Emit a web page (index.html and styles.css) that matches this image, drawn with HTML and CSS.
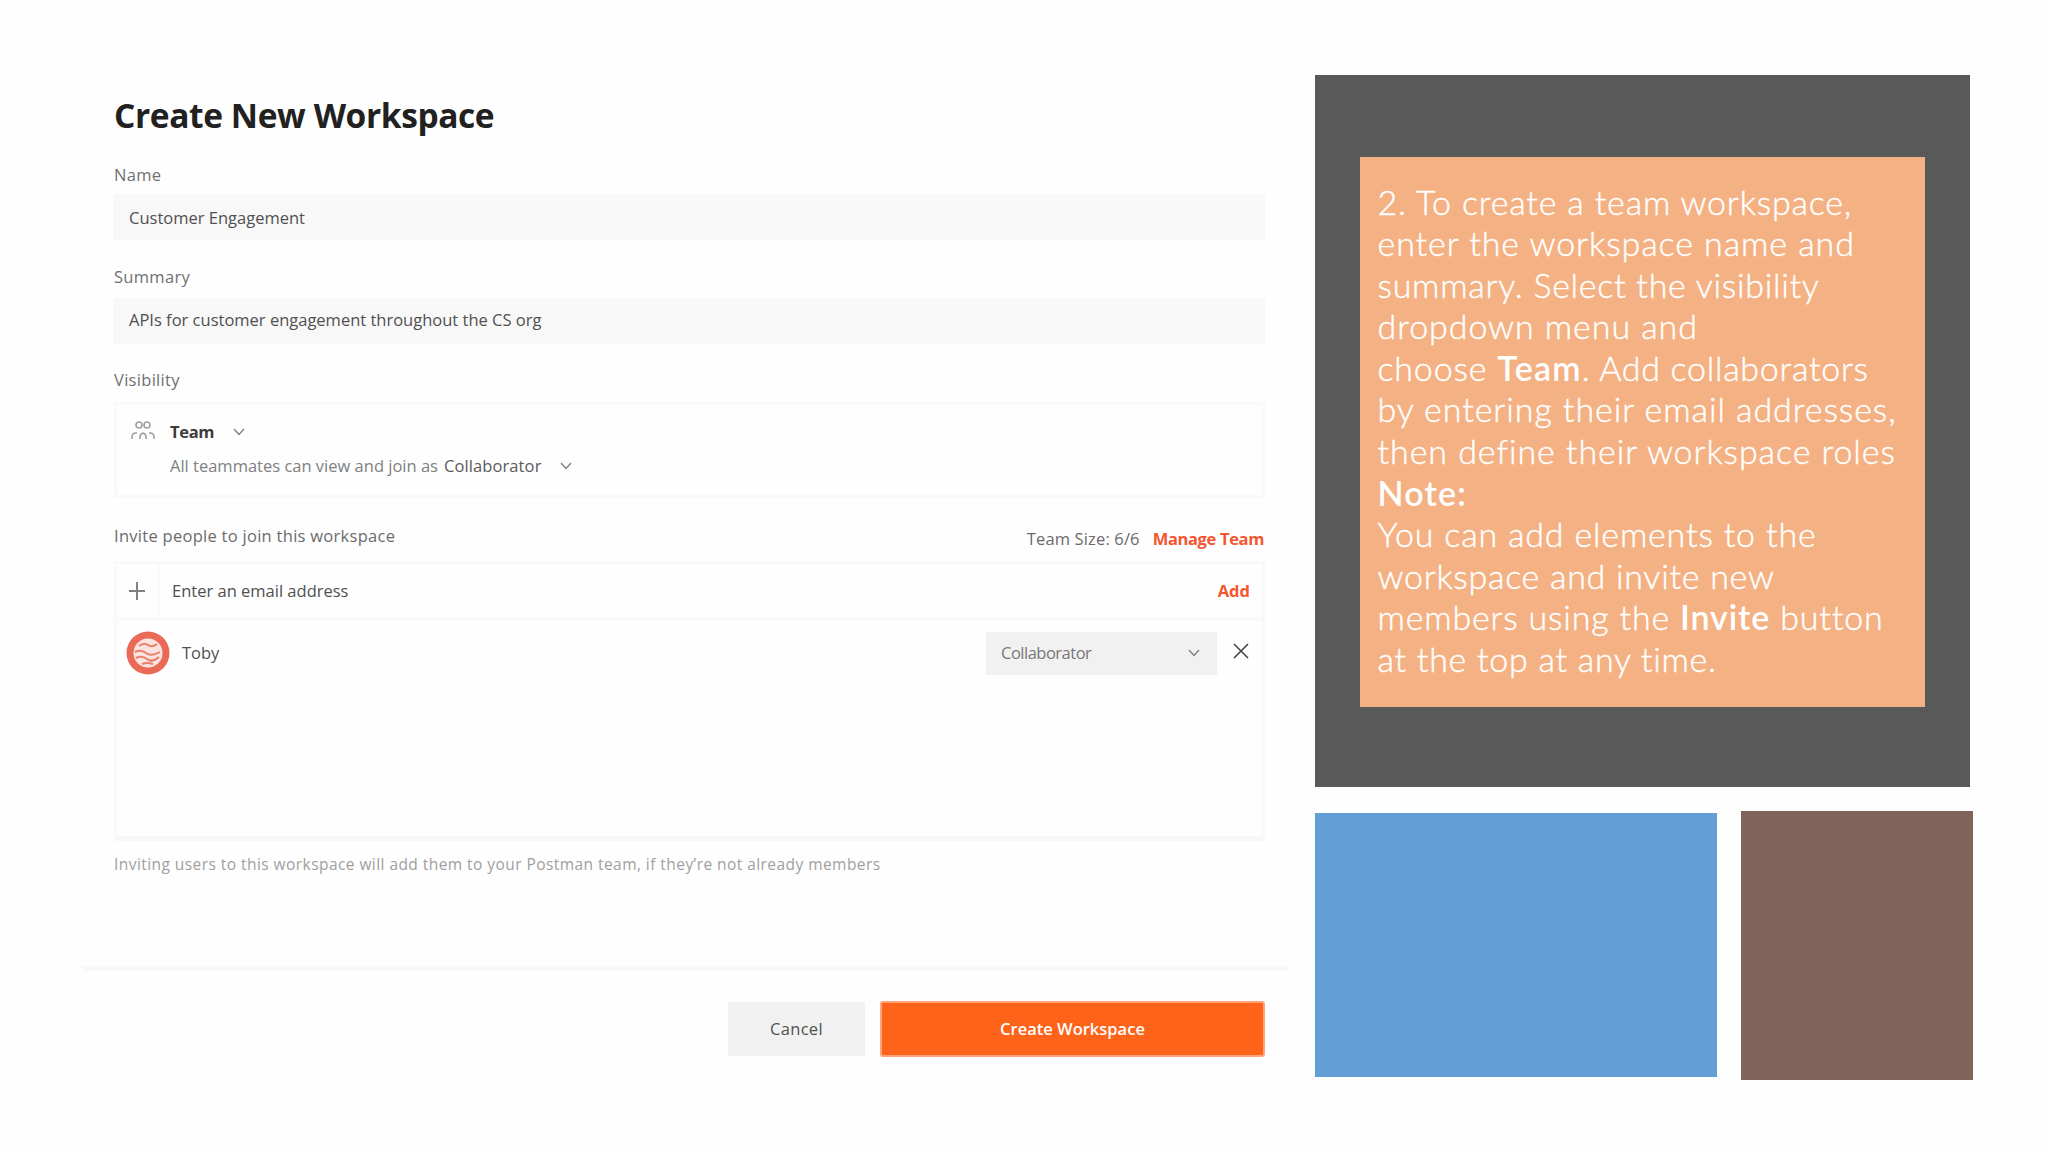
FILE: index.html
```html
<!DOCTYPE html>
<html lang="en">
<head>
<meta charset="utf-8">
<title>Create New Workspace</title>
<link rel="stylesheet" href="styles.css">
</head>
<body>
<main class="slide">
  <section class="dialog">
    <div class="form">
      <h1 class="title">Create New Workspace</h1>
      <div class="label label-name">Name</div>
      <div class="field">Customer Engagement</div>
      <div class="label label-summary">Summary</div>
      <div class="field field-summary">APIs for customer engagement throughout the CS org</div>
      <div class="label label-visibility">Visibility</div>
      <div class="visibility">
        <svg class="people" viewBox="0 0 26 22"><g fill="none" stroke="#a0a0a0" stroke-width="1.6"><circle cx="9" cy="5" r="3"/><circle cx="17" cy="5" r="3"/><path d="M2 19v-2q0-4 4-4h1M10 19v-2q0-3 3-4q3 1 3 4v2M19 13h1q4 0 4 4v2"/></g></svg>
        <div class="visibility-text">
          <div class="line"><b class="team">Team</b><svg class="chev chev-team" viewBox="0 0 12 8"><path d="M1 1l5 5.500l5-5.500"/></svg></div>
          <div class="line role"><span class="muted">All teammates can view and join as</span><span class="role-name">Collaborator</span><svg class="chev chev-role" viewBox="0 0 12 8"><path d="M1 1l5 5.500l5-5.500"/></svg></div>
        </div>
      </div>
      <div class="invite-head">
        <span class="invite-label">Invite people to join this workspace</span>
        <span class="team-size">Team Size: 6/6</span>
        <b class="link manage">Manage Team</b>
      </div>
      <div class="people-box">
        <div class="email-row">
          <div class="plus"><svg viewBox="0 0 18 18"><path d="M9 0v18M1 9h16"/></svg></div>
          <div class="email">Enter an email address</div>
          <b class="link">Add</b>
        </div>
        <div class="member-row">
          <svg class="avatar" viewBox="0 0 44 44"><circle cx="22" cy="22" r="21.500" fill="#ea6a57"/><circle cx="22" cy="22" r="14.500" fill="#fbe3df"/><g fill="none" stroke="#ea7d6c" stroke-width="2"><path d="M13 15q5-4 9-1t9-1M9 21q6-3 11 1t14-1M10 27q6-3 11 1t12-2M16 33q5-2 11 0"/></g></svg>
          <span class="member">Toby</span>
          <div class="select"><span>Collaborator</span><svg class="chev" viewBox="0 0 12 8"><path d="M1 1l5 5.500l5-5.500"/></svg></div>
          <svg class="close" viewBox="0 0 16 16"><path d="M1 1l14 14M15 1l-14 14"/></svg>
        </div>
      </div>
      <p class="note">Inviting users to this workspace will add them to your Postman team, if they’re not already members</p>
    </div>
    <footer class="actions">
      <div class="btn cancel">Cancel</div>
      <div class="btn create">Create Workspace</div>
    </footer>
  </section>
  <aside class="side">
    <div class="frame">
      <div class="copy">
        <div>2. To create a team workspace,</div>
        <div class="wide">enter the workspace name and</div>
        <div class="tight">summary. Select the visibility</div>
        <div class="wide">dropdown menu and</div>
        <div>choose <b>Team</b><span class="tight">. Add collaborators</span></div>
        <div class="wide">by entering their email addresses,</div>
        <div class="wide">then define their workspace roles</div>
        <div><b>Note:</b></div>
        <div>You can add elements to the</div>
        <div class="tight">workspace and invite new</div>
        <div>members using the <b class="invite">Invite</b> button</div>
        <div class="tight">at the top at any time.</div>
      </div>
    </div>
    <div class="tiles"><div class="tile blue"></div><div class="tile brown"></div></div>
  </aside>
</main>
</body>
</html>
```
FILE: styles.css
```css
* { box-sizing: border-box; }
body { margin: 0; background: #fefefe; }
.slide { width: 2048px; height: 1152px; display: flex; overflow: hidden; font-family: "Open Sans", "Noto Sans", sans-serif; font-size: 16.5px; line-height: 24px; color: #505050; white-space: nowrap; }
svg { display: block; flex: none; }
b { font-weight: 700; }
.dialog { width: 1205px; margin-left: 82px; padding-top: 93px; }
.form { height: 873px; padding: 0 22px 0 32px; }
.title { margin: 0; font-size: 33.5px; line-height: 44px; font-weight: 700; color: #212121; letter-spacing: -0.4px; }
.label { color: #707070; letter-spacing: 0.3px; }
.label-name { margin: 26px 0 7px; }
.label-summary { margin: 25px 0 9px; }
.label-visibility { margin: 24px 0 10px; }
.field { height: 46px; padding: 12px 16px 10px; background: #f8f8f8; margin-left: -1px; }
.field-summary { padding: 10px 16px 12px; }
.visibility { height: 96px; border: 3px solid #f9f9f9; display: flex; padding: 15px 0 0 14px; }
.people { width: 26px; height: 22px; margin-left: -1px; }
.visibility-text { margin-left: 14px; }
.line { display: flex; align-items: center; color: #3c3c3c; }
.team { letter-spacing: -0.3px; }
.role { margin-top: 10px; }
.muted { color: #808080; }
.role-name { margin-left: 6px; color: #5a5a5a; letter-spacing: 0.1px; }
.chev { width: 12px; height: 8px; fill: none; stroke: #808080; stroke-width: 1.4; }
.chev-team { margin-left: 19px; }
.chev-role { margin-left: 19px; }
.invite-head { display: flex; margin-top: 26px; height: 37px; color: #6b6b6b; }
.invite-label { letter-spacing: 0.28px; }
.team-size { margin: 3px 13px 0 auto; letter-spacing: 0.15px; }
.manage { margin: 3px 1px 0 0; letter-spacing: -0.35px; }
.link { color: #f4562f; }
.people-box { height: 280px; border: 3px solid #f9f9f9; border-bottom-width: 5px; border-bottom-color: #f9f7f8; }
.email-row { display: flex; height: 57px; border-bottom: 4px solid #f9f9f9; align-items: center; padding-right: 12px; }
.plus { width: 43px; height: 53px; border-right: 3px solid #fafafa; display: flex; align-items: center; justify-content: center; }
.plus svg { width: 18px; height: 18px; stroke: #808080; stroke-width: 2; }
.email { flex: 1; padding-left: 12px; }
.member-row { display: flex; align-items: center; height: 64px; padding: 0 13px 0 9px; }
.avatar { width: 44px; height: 44px; }
.member { margin-left: 12px; }
.select { margin-left: auto; width: 231px; height: 43px; background: #f2f1f2; display: flex; justify-content: space-between; align-items: center; padding: 0 17px 0 15px; color: #777; letter-spacing: -0.5px; }
.close { width: 16px; height: 16px; margin: -4px 0 0 16px; stroke: #444; stroke-width: 1.6; }
.note { margin: 11px 0 0; font-size: 15.5px; color: #a0a0a0; letter-spacing: 0.44px; }
.actions { border-top: 5px solid #f9f7f8; display: flex; justify-content: flex-end; gap: 15px; padding: 30px 22px 0 0; }
.btn { display: flex; align-items: center; justify-content: center; }
.cancel { width: 137px; height: 54px; margin-top: 1px; background: #f2f1f2; letter-spacing: 0.3px; }
.create { width: 385px; height: 56px; background: #ff6219; border: 2px solid #ffa47a; border-radius: 3px; color: #fff; font-weight: 600; }
.side { margin-left: 28px; padding-top: 75px; }
.frame { width: 655px; height: 712px; background: #595959; padding: 82px 0 0 45px; }
.copy { width: 565px; height: 550px; padding: 23.5px 0 0 17.5px; background: #f4b183; font-family: Lato, sans-serif; font-weight: 300; font-size: 34px; line-height: 41.6px; letter-spacing: 0.82px; color: #fff; -webkit-text-stroke: 0.4px #fff; }
.copy b { -webkit-text-stroke: 0; font-weight: 600; letter-spacing: 1.2px; }
.copy .invite { letter-spacing: 0.9px; }
.copy .wide { letter-spacing: 0.93px; }
.copy .tight { letter-spacing: 0.72px; }
.tiles { display: flex; gap: 24px; margin-top: 24px; }
.tile { flex: none; }
.blue { width: 402px; height: 264px; margin-top: 2px; background: #639fd6; }
.brown { width: 232px; height: 269px; background: #806359; }
```
